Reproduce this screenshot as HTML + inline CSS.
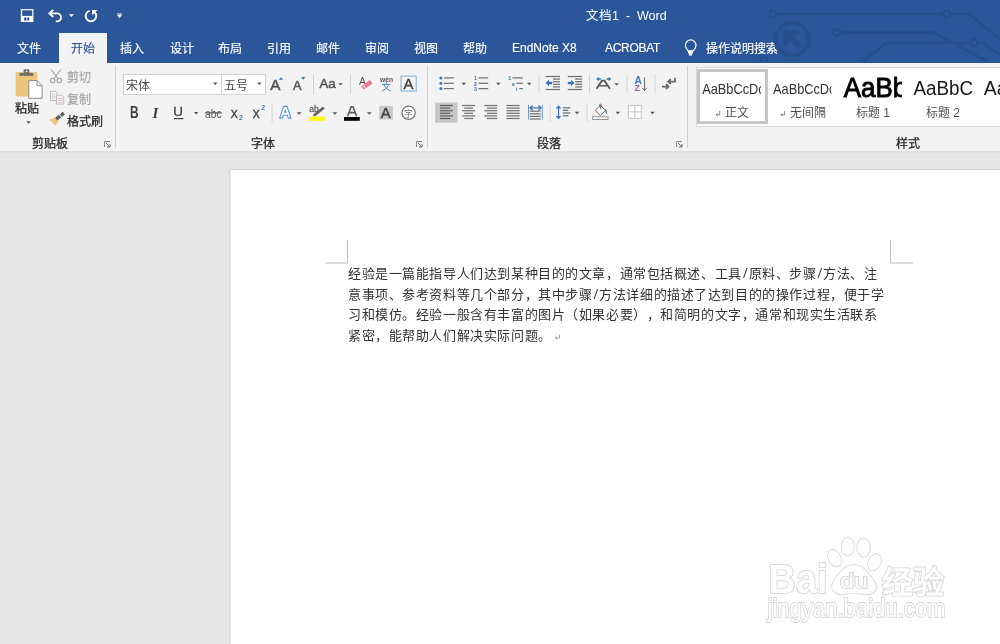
<!DOCTYPE html>
<html lang="zh-CN">
<head>
<meta charset="utf-8">
<style>
html,body{margin:0;padding:0;}
body{width:1000px;height:644px;overflow:hidden;position:relative;background:#E6E6E6;font-family:"Liberation Sans",sans-serif;}
.a{position:absolute;white-space:nowrap;will-change:transform;}
#title{left:0;top:0;width:1000px;height:63px;background:#2B579A;}
#ribbon{left:0;top:63px;width:1000px;height:88px;background:#F3F3F3;border-bottom:2px solid #DFDFDF;}
#acttab{left:59px;top:33px;width:48px;height:31px;background:#F3F3F3;}
.tab{font-size:12px;line-height:16px;color:#fff;top:41px;-webkit-text-stroke:0.15px currentColor;}
.lbl{font-size:12px;line-height:16px;color:#262626;-webkit-text-stroke:0.25px currentColor;}
.grp{font-size:12px;line-height:16px;color:#262626;top:135.5px;-webkit-text-stroke:0.25px currentColor;}
#page{left:229px;top:169px;width:780px;height:500px;background:#fff;border:1px solid #D6D6D6;box-shadow:inset 1px 0 0 #EEEEEE;}
.doc{text-spacing-trim:space-all;font-family:"Liberation Serif",serif;font-size:13px;letter-spacing:0.58px;line-height:20px;color:#333;left:348px;}
.sl{display:inline-block;width:6.79px;text-align:center;letter-spacing:0;font-size:15px;line-height:10px;font-weight:bold;}
</style>
</head>
<body>
<div id="title" class="a"></div>
<div id="ribbon" class="a"></div>
<div id="acttab" class="a"></div>
<div id="page" class="a"></div>

<!-- title text -->
<div class="a" style="left:586px;top:8px;font-size:12.5px;line-height:16px;color:#fff;">文档1&nbsp; -&nbsp; Word</div>

<!-- tabs -->
<div class="a tab" style="left:17px">文件</div>
<div class="a tab" style="left:71px;color:#2B579A">开始</div>
<div class="a tab" style="left:120px">插入</div>
<div class="a tab" style="left:169.5px">设计</div>
<div class="a tab" style="left:217.5px">布局</div>
<div class="a tab" style="left:267px">引用</div>
<div class="a tab" style="left:315.5px">邮件</div>
<div class="a tab" style="left:365px">审阅</div>
<div class="a tab" style="left:414px">视图</div>
<div class="a tab" style="left:462.5px">帮助</div>
<div class="a tab" style="left:512px;top:40px">EndNote X8</div>
<div class="a tab" style="left:605px;top:40px;letter-spacing:-0.3px">ACROBAT</div>
<div class="a tab" style="left:706px">操作说明搜索</div>

<!-- clipboard labels -->
<div class="a lbl" style="left:14.7px;top:101px">粘贴</div>
<div class="a lbl" style="left:66.8px;top:70px;color:#A6A6A6">剪切</div>
<div class="a lbl" style="left:66.8px;top:92px;color:#A6A6A6">复制</div>
<div class="a lbl" style="left:66.8px;top:114px">格式刷</div>
<div class="a grp" style="left:32.4px">剪贴板</div>
<div class="a grp" style="left:251px">字体</div>
<div class="a grp" style="left:537px">段落</div>
<div class="a grp" style="left:896px">样式</div>

<!-- font boxes -->
<div class="a" style="left:123px;top:74px;width:97px;height:19px;background:#fff;border:1px solid #D2D2D2;"></div>
<div class="a" style="left:221px;top:74px;width:43px;height:19px;background:#fff;border:1px solid #D2D2D2;"></div>
<div class="a lbl" style="left:125.8px;top:78px;color:#4A4A4A;-webkit-text-stroke:0">宋体</div>
<div class="a lbl" style="left:224.3px;top:78px;color:#4A4A4A;-webkit-text-stroke:0">五号</div>

<!-- styles gallery -->
<div class="a" style="left:696px;top:67px;width:310px;height:58px;background:#fff;border:1px solid #D9D9D9;"></div>
<div class="a" style="left:696.5px;top:69px;width:64.5px;height:49px;border:3.5px solid #C6C6C6;"></div>

<div class="a lbl" style="left:724.9px;top:105px;color:#505050;-webkit-text-stroke:0">正文</div>
<div class="a lbl" style="left:789.5px;top:105px;color:#505050;-webkit-text-stroke:0">无间隔</div>
<div class="a lbl" style="left:855.9px;top:105px;color:#505050;-webkit-text-stroke:0">标题 1</div>
<div class="a lbl" style="left:926px;top:105px;color:#505050;-webkit-text-stroke:0">标题 2</div>
<!-- document text -->
<div class="a doc" style="top:264px">经验是一篇能指导人们达到某种目的的文章，通常包括概述、工具<span class="sl">/</span>原料、步骤<span class="sl">/</span>方法、注</div>
<div class="a doc" style="top:284.5px">意事项、参考资料等几个部分，其中步骤<span class="sl">/</span>方法详细的描述了达到目的的操作过程，便于学</div>
<div class="a doc" style="top:305px">习和模仿。经验一般含有丰富的图片（如果必要），和简明的文字，通常和现实生活联系</div>
<div class="a doc" style="top:325.5px">紧密，能帮助人们解决实际问题。</div>
<svg class="a" style="left:0;top:0" width="1000" height="644" viewBox="0 0 1000 644">
<!--TITLE-->
<defs><clipPath id="tb"><rect x="0" y="0" width="1000" height="63"/></clipPath></defs>
<g clip-path="url(#tb)">
<g fill="none" stroke="#264F8D" stroke-width="2.6">
<circle cx="773" cy="14" r="3.4"/><path d="M776.4 14H943.3"/><circle cx="946.7" cy="14" r="3.4"/><path d="M950.1 14H969L1004 42"/>
<circle cx="836.7" cy="32.5" r="3.4"/><path d="M840.1 32.5H934L992 64"/>
<path d="M860 64L886 42.9H970.6"/><circle cx="974" cy="42.9" r="3.4"/><path d="M977.4 42.9H983L1004 58"/>
<circle cx="792.2" cy="39.2" r="16.4" stroke-width="4"/>
<circle cx="763.8" cy="60.3" r="3.4"/>
</g>
<path d="M783 30.1H799V35.5H792.4L801.6 44.7L797.8 48.5L788.4 39.1V46H783Z" fill="#264F8D"/>
<rect x="0" y="62" width="59" height="1" fill="#2A5493"/><rect x="107" y="62" width="893" height="1" fill="#2A5493"/>
</g>
<rect x="20.8" y="9.1" width="12.6" height="12.9" fill="#fff"/>
<rect x="22.2" y="10.3" width="10" height="5.6" fill="#2B579A"/>
<rect x="24.1" y="17.5" width="5.1" height="3" fill="#2B579A"/><rect x="26.4" y="17.5" width="0.9" height="3" fill="#fff"/>
<path d="M53.2 9.9L49.4 13.4L53.2 16.9M49.6 13.4H57A4 4 0 0 1 57 21.4H55.8" fill="none" stroke="#fff" stroke-width="1.9"/>
<path d="M68.8 14.2h5.1l-2.55 2.7z" fill="#fff"/>
<path d="M94.6 12.1A5.3 5.3 0 1 1 89.7 10.8" fill="none" stroke="#fff" stroke-width="1.9"/>
<path d="M92 10H97.6L92 15.2Z" fill="#fff"/>
<rect x="117" y="13" width="5" height="1.8" fill="#8BA5CC"/><path d="M117 14.8h5l-2.5 3.4z" fill="#fff"/>
<path d="M688.3 51.2C686.6 49.3 685.4 47.6 685.4 45.2A5.3 5.3 0 0 1 696 45.2C696 47.6 694.8 49.3 693.1 51.2Z" fill="none" stroke="#fff" stroke-width="1.2"/>
<rect x="688" y="50.4" width="5" height="3.2" fill="#fff"/><rect x="689" y="53.4" width="3" height="2.2" fill="#fff"/>
<!--/TITLE-->
<!--RIBBON-->
<rect x="115" y="65.5" width="1" height="82.5" fill="#D0D0D0"/>
<rect x="427" y="65.5" width="1" height="82.5" fill="#D0D0D0"/>
<rect x="687" y="65.5" width="1" height="82.5" fill="#D0D0D0"/>
<path d="M104.5 147V141.5H110" fill="none" stroke="#8A8A8A" stroke-width="1"/><path d="M106 143L109.5 146.5M110 144V147H107" fill="none" stroke="#666" stroke-width="1"/>
<path d="M416.5 147V141.5H422" fill="none" stroke="#8A8A8A" stroke-width="1"/><path d="M418 143L421.5 146.5M422 144V147H419" fill="none" stroke="#666" stroke-width="1"/>
<path d="M676.5 147V141.5H682" fill="none" stroke="#8A8A8A" stroke-width="1"/><path d="M678 143L681.5 146.5M682 144V147H679" fill="none" stroke="#666" stroke-width="1"/>
<rect x="15.6" y="72.1" width="21.7" height="24.5" rx="1.5" fill="#EBC57A"/>
<rect x="19.6" y="73" width="13.7" height="2.8" fill="#6D6D6D"/><rect x="23.7" y="69.3" width="5.6" height="4" rx="1" fill="#6D6D6D"/><circle cx="26.5" cy="71.4" r="0.9" fill="#F3F3F3"/>
<path d="M28.8 80.5H37L42.1 85.6V98.3H28.8Z" fill="#fff" stroke="#8C8C8C" stroke-width="1"/><path d="M37 80.5V85.6H42.1" fill="none" stroke="#8C8C8C" stroke-width="1"/>
<path d="M26.3 121.3h4.6l-2.30 2.4z" fill="#555"/>
<g fill="none" stroke="#A8A8A8" stroke-width="1.1"><circle cx="52.6" cy="80.6" r="2.3"/><circle cx="59.4" cy="80.6" r="2.3"/><path d="M51.2 69.6L58.1 78.6M60.8 69.6L53.9 78.6"/></g>
<g fill="#F8F3F6" stroke="#B8B8B8" stroke-width="0.9"><path d="M50.6 91.3H55.3L57.4 93.4V100.5H50.6Z"/><path d="M56.5 95.2H61.6L63.7 97.3V104.2H56.5Z"/></g>
<g stroke="#D0B9C6" stroke-width="0.8"><path d="M51.8 94H54.5M51.8 96H55.5M51.8 98H55.5M57.8 98.5H62.5M57.8 100.5H62.5M57.8 102.5H62.5"/></g>
<path d="M49.4 119.8L55 117.2L58.8 121.2L55.4 125.6Z" fill="#EBC57A"/>
<path d="M56.2 119.2L60 116.2M60.8 115.6L63.8 113.2" stroke="#5E5E5E" stroke-width="3.4" stroke-linecap="butt"/>
<path d="M212.9 82.4h4.6l-2.30 2.5z" fill="#555"/>
<path d="M257 82.4h4.6l-2.30 2.5z" fill="#555"/>
<text x="270.3" y="90" font-family="Liberation Sans" font-size="15.2" fill="#505050" stroke="#505050" stroke-width="0.5">A</text>
<path d="M278.8 79.8L281 77.2L283.2 79.8Z" fill="#3F78BF"/>
<text x="293" y="90" font-family="Liberation Sans" font-size="12.6" fill="#505050" stroke="#505050" stroke-width="0.45">A</text>
<path d="M301 77H305.4L303.2 79.8Z" fill="#3F78BF"/>
<rect x="313" y="74.8" width="1" height="18.799999999999997" fill="#D4D4D4"/>
<text x="319.4" y="88" font-family="Liberation Sans" font-size="13.2" fill="#505050" stroke="#505050" stroke-width="0.45">Aa</text>
<path d="M338.1 83.2h4.7l-2.35 2.4z" fill="#555"/>
<rect x="350" y="74.8" width="1" height="18.799999999999997" fill="#D4D4D4"/>
<text x="359" y="85" font-family="Liberation Sans" font-size="10.5" fill="#555">A</text>
<g transform="rotate(-36 366.8 84.8)"><rect x="361.4" y="82.5" width="10.8" height="4.6" rx="0.8" fill="#E8808F"/><rect x="363.2" y="82.5" width="0.8" height="4.6" fill="#F3F3F3"/></g>
<text x="380" y="82" font-family="Liberation Sans" font-size="8" font-weight="bold" fill="#555" textLength="13" lengthAdjust="spacingAndGlyphs">wén</text>
<path d="M386.2 82.2V83.8M382.2 84.4H390.4M383.8 84.6Q385.5 89 390.6 91.2M388.8 84.6Q387.2 89 381.8 91.2" fill="none" stroke="#4A7EBB" stroke-width="0.9"/>
<rect x="401.1" y="76.1" width="15.1" height="15" fill="none" stroke="#8DB0DA" stroke-width="1.1"/>
<text x="403.4" y="88.9" font-family="Liberation Sans" font-size="14.8" fill="#404040" stroke="#404040" stroke-width="0.4">A</text>
<text x="130.1" y="117.6" font-family="Liberation Sans" font-size="15.6" font-weight="bold" fill="#404040" textLength="8.6" lengthAdjust="spacingAndGlyphs">B</text>
<text x="152.4" y="117.6" font-family="Liberation Serif" font-size="15" font-style="italic" font-weight="bold" fill="#404040">I</text>
<text x="173.2" y="116.4" font-family="Liberation Sans" font-size="13.4" fill="#404040" stroke="#404040" stroke-width="0.3">U</text>
<rect x="174" y="118" width="9.4" height="1.2" fill="#404040"/>
<path d="M193.8 112h4.6l-2.30 2.6z" fill="#555"/>
<text x="205" y="117.6" font-family="Liberation Sans" font-size="12.5" fill="#606060" textLength="16.5" lengthAdjust="spacingAndGlyphs">abc</text>
<rect x="205" y="112.2" width="16.6" height="1.3" fill="#606060"/>
<text x="230.7" y="117.6" font-family="Liberation Sans" font-size="10.4" fill="#404040" stroke="#404040" stroke-width="0.45">X</text>
<text x="239" y="120.4" font-family="Liberation Sans" font-size="6.8" font-weight="bold" fill="#3F78BF">2</text>
<text x="252.7" y="117.6" font-family="Liberation Sans" font-size="10.4" fill="#404040" stroke="#404040" stroke-width="0.45">X</text>
<text x="261.3" y="110.4" font-family="Liberation Sans" font-size="6.8" font-weight="bold" fill="#3F78BF">2</text>
<rect x="271.6" y="104" width="1" height="18.400000000000006" fill="#D4D4D4"/>
<path d="M283.6 106.4H287.1L291 118.1H288.3L287.4 115.2H283.3L282.4 118.1H279.7Z" fill="#F7FAFD" stroke="#5B8FD0" stroke-width="1.1" stroke-linejoin="round"/><path d="M284 112.8L285.35 108.8L286.7 112.8Z" fill="#5B8FD0"/>
<path d="M296.8 112.2h4.7l-2.35 2.6z" fill="#555"/>
<text x="309.3" y="111.8" font-family="Liberation Sans" font-size="8.6" fill="#666" stroke="#666" stroke-width="0.3">ab</text>
<path d="M314 115.5L323.8 107.6" stroke="#666" stroke-width="2.8"/><path d="M312.6 116.6L314.2 114.6L315.4 115.8Z" fill="#666"/>
<rect x="309" y="116.8" width="16.2" height="4" fill="#FFFF00"/>
<path d="M332.5 112.2h4.6l-2.30 2.6z" fill="#555"/>
<path d="M347.6 116.2L351.2 106.8H353L356.6 116.2M349.2 112.6H355" fill="none" stroke="#5A5A5A" stroke-width="1.6"/>
<rect x="344" y="117" width="15.8" height="3.8" fill="#000"/>
<path d="M367 112.2h4.6l-2.30 2.6z" fill="#555"/>
<rect x="379.2" y="105.9" width="13.7" height="13.5" fill="#C8C8C8"/>
<text x="380.8" y="118" font-family="Liberation Sans" font-size="14.8" fill="#404040" stroke="#404040" stroke-width="0.4">A</text>
<circle cx="408.6" cy="112.8" r="6.6" fill="#fff" stroke="#777" stroke-width="1.2"/>
<text x="404.4" y="117" font-family="Liberation Sans" font-size="8.6" fill="#666">字</text>
<circle cx="440.9" cy="77.9" r="1.5" fill="#3D74BC"/><rect x="444" y="77.3" width="9.8" height="1.2" fill="#6E6E6E"/>
<circle cx="440.9" cy="83.3" r="1.5" fill="#3D74BC"/><rect x="444" y="82.7" width="9.8" height="1.2" fill="#6E6E6E"/>
<circle cx="440.9" cy="88.6" r="1.5" fill="#3D74BC"/><rect x="444" y="88.0" width="9.8" height="1.2" fill="#6E6E6E"/>
<path d="M461.4 82.8h4.7l-2.35 2.4z" fill="#555"/>
<rect x="478.7" y="77.3" width="9.5" height="1.2" fill="#6E6E6E"/>
<rect x="478.7" y="82.7" width="9.5" height="1.2" fill="#6E6E6E"/>
<rect x="478.7" y="88.0" width="9.5" height="1.2" fill="#6E6E6E"/>
<text x="474" y="80.4" font-family="Liberation Sans" font-size="5.4" font-weight="bold" fill="#3D74BC">1</text><text x="474" y="85.8" font-family="Liberation Sans" font-size="5.4" font-weight="bold" fill="#3D74BC">2</text><text x="474" y="91.1" font-family="Liberation Sans" font-size="5.4" font-weight="bold" fill="#3D74BC">3</text>
<path d="M496 82.8h4.7l-2.35 2.4z" fill="#555"/>
<rect x="512.4" y="77.3" width="10.5" height="1.2" fill="#6E6E6E"/><rect x="516.6" y="82.7" width="6.3" height="1.2" fill="#6E6E6E"/><rect x="519.2" y="88" width="3.7" height="1.2" fill="#6E6E6E"/>
<text x="508.2" y="80.4" font-family="Liberation Sans" font-size="5.4" font-weight="bold" fill="#3D74BC">1</text><text x="511.8" y="85.8" font-family="Liberation Sans" font-size="5.4" font-weight="bold" fill="#3D74BC">a</text><text x="516" y="91.1" font-family="Liberation Sans" font-size="5.4" font-weight="bold" fill="#3D74BC">i</text>
<path d="M527 82.8h4.4l-2.20 2.4z" fill="#555"/>
<rect x="538.6" y="74.6" width="1" height="18.200000000000003" fill="#D4D4D4"/>
<rect x="545.6" y="75.9" width="14.4" height="1.2" fill="#6E6E6E"/><rect x="553.0" y="78.5" width="7" height="1.2" fill="#6E6E6E"/><rect x="553.0" y="81.1" width="7" height="1.2" fill="#6E6E6E"/><rect x="553.0" y="83.7" width="7" height="1.2" fill="#6E6E6E"/><rect x="553.0" y="86.3" width="7" height="1.2" fill="#6E6E6E"/><rect x="545.6" y="88.9" width="14.4" height="1.2" fill="#6E6E6E"/><path d="M545.6 83L549.0 79.8V81.8H552.2V84.2H549.0V86.2Z" fill="#3D74BC"/>
<rect x="567.8" y="75.9" width="14.4" height="1.2" fill="#6E6E6E"/><rect x="575.2" y="78.5" width="7" height="1.2" fill="#6E6E6E"/><rect x="575.2" y="81.1" width="7" height="1.2" fill="#6E6E6E"/><rect x="575.2" y="83.7" width="7" height="1.2" fill="#6E6E6E"/><rect x="575.2" y="86.3" width="7" height="1.2" fill="#6E6E6E"/><rect x="567.8" y="88.9" width="14.4" height="1.2" fill="#6E6E6E"/><path d="M574.5 83L571.1 79.8V81.8H567.8V84.2H571.1V86.2Z" fill="#3D74BC"/>
<rect x="589" y="74.6" width="1" height="18.200000000000003" fill="#D4D4D4"/>
<path d="M596.5 88.7L602 80.6H604.4L609.9 88.7" fill="none" stroke="#505050" stroke-width="1.8"/><path d="M599.4 85.8H607" stroke="#505050" stroke-width="1.4"/>
<path d="M596 79L598.7 76.8V78.2H600.9V79.8H598.7V81.2Z" fill="#3D74BC"/><path d="M611.3 79L608.6 76.8V78.2H606.4V79.8H608.6V81.2Z" fill="#3D74BC"/>
<path d="M614.2 83.3h4.7l-2.35 2.3z" fill="#555"/>
<rect x="626.6" y="74.6" width="1" height="18.200000000000003" fill="#D4D4D4"/>
<text x="634.4" y="83.7" font-family="Liberation Sans" font-size="10.2" font-weight="bold" fill="#3D7CC9">A</text>
<text x="634.6" y="90.9" font-family="Liberation Sans" font-size="8.6" font-weight="bold" fill="#8E5CC2">Z</text>
<path d="M644.6 77.2V90.4M642.3 87.8L644.6 90.6L646.9 87.8" fill="none" stroke="#6A6A6A" stroke-width="1"/>
<rect x="654.5" y="74.6" width="1" height="18.200000000000003" fill="#D4D4D4"/>
<path d="M675 77.8V81.6H668.6M670.8 79.2L668.2 81.6L670.8 84" fill="none" stroke="#6A6A6A" stroke-width="1.8"/>
<path d="M662 86.6H668.2M666 84.2L668.6 86.6L666 89" fill="none" stroke="#6A6A6A" stroke-width="1.8"/>
<rect x="435.2" y="102.6" width="22.3" height="20.1" fill="#C6C6C6"/>
<rect x="440" y="104.9" width="12.9" height="1.2" fill="#5E5E5E"/>
<rect x="462.1" y="104.9" width="13" height="1.2" fill="#6E6E6E"/>
<rect x="484.3" y="104.9" width="13" height="1.2" fill="#6E6E6E"/>
<rect x="506.5" y="104.9" width="13.1" height="1.2" fill="#6E6E6E"/>
<rect x="440" y="107.5" width="10.2" height="1.2" fill="#5E5E5E"/>
<rect x="464.2" y="107.5" width="8.9" height="1.2" fill="#6E6E6E"/>
<rect x="487" y="107.5" width="10.3" height="1.2" fill="#6E6E6E"/>
<rect x="506.5" y="107.5" width="13.1" height="1.2" fill="#6E6E6E"/>
<rect x="440" y="110.1" width="12.9" height="1.2" fill="#5E5E5E"/>
<rect x="462.1" y="110.1" width="13" height="1.2" fill="#6E6E6E"/>
<rect x="484.3" y="110.1" width="13" height="1.2" fill="#6E6E6E"/>
<rect x="506.5" y="110.1" width="13.1" height="1.2" fill="#6E6E6E"/>
<rect x="440" y="112.7" width="10.2" height="1.2" fill="#5E5E5E"/>
<rect x="464.2" y="112.7" width="8.9" height="1.2" fill="#6E6E6E"/>
<rect x="487" y="112.7" width="10.3" height="1.2" fill="#6E6E6E"/>
<rect x="506.5" y="112.7" width="13.1" height="1.2" fill="#6E6E6E"/>
<rect x="440" y="115.3" width="12.9" height="1.2" fill="#5E5E5E"/>
<rect x="462.1" y="115.3" width="13" height="1.2" fill="#6E6E6E"/>
<rect x="484.3" y="115.3" width="13" height="1.2" fill="#6E6E6E"/>
<rect x="506.5" y="115.3" width="13.1" height="1.2" fill="#6E6E6E"/>
<rect x="440" y="117.9" width="10.2" height="1.2" fill="#5E5E5E"/>
<rect x="464.2" y="117.9" width="8.9" height="1.2" fill="#6E6E6E"/>
<rect x="487" y="117.9" width="10.3" height="1.2" fill="#6E6E6E"/>
<rect x="506.5" y="117.9" width="13.1" height="1.2" fill="#6E6E6E"/>
<rect x="528" y="104.9" width="1" height="14.7" fill="#6C9AD3"/><rect x="541.8" y="104.9" width="1" height="14.7" fill="#6C9AD3"/>
<path d="M530 107.8H541M532.6 105.4L530 107.8L532.6 110.2M538.4 105.4L541 107.8L538.4 110.2" fill="none" stroke="#3D74BC" stroke-width="1.3"/>
<rect x="529.8" y="110.6" width="10.8" height="1.2" fill="#6E6E6E"/>
<rect x="529.8" y="113.2" width="10.8" height="1.2" fill="#6E6E6E"/>
<rect x="529.8" y="115.8" width="10.8" height="1.2" fill="#6E6E6E"/>
<rect x="529.8" y="118.4" width="10.8" height="1.2" fill="#6E6E6E"/>
<rect x="549.6" y="103.2" width="1" height="18.39999999999999" fill="#D4D4D4"/>
<path d="M558.5 107.5V117" stroke="#3D74BC" stroke-width="1.3"/><path d="M555.8 108.6L558.5 104.9L561.2 108.6ZM555.8 115.9L558.5 119.6L561.2 115.9Z" fill="#3D74BC"/>
<rect x="562.8" y="107.2" width="7.5" height="1.2" fill="#6E6E6E"/>
<rect x="562.8" y="109.8" width="5.5" height="1.2" fill="#6E6E6E"/>
<rect x="562.8" y="112.4" width="7.5" height="1.2" fill="#6E6E6E"/>
<rect x="562.8" y="115.2" width="5.5" height="1.2" fill="#6E6E6E"/>
<path d="M574.7 111.8h4.6l-2.30 2.4z" fill="#555"/>
<rect x="586.6" y="103.2" width="1" height="18.39999999999999" fill="#D4D4D4"/>
<path d="M595.3 110.4L600.4 105.3L605.5 110.4L600.4 115.5Z" fill="#fff" stroke="#6E6E6E" stroke-width="1"/>
<path d="M600.4 104.5V109.5" stroke="#6E6E6E" stroke-width="0.9"/><circle cx="600.4" cy="105.2" r="1.2" fill="none" stroke="#6E6E6E" stroke-width="0.8"/>
<path d="M604.8 108.4Q607.8 110.5 606.5 114.6Q605.2 112 604.8 108.4Z" fill="#3D74BC"/>
<rect x="592.6" y="116.8" width="15.4" height="2.7" fill="#fff" stroke="#8A8A8A" stroke-width="0.9"/>
<path d="M615.6 111.8h4.5l-2.25 2.4z" fill="#555"/>
<rect x="628.3" y="105.4" width="13" height="13" fill="#fff" stroke="#C4C4C4" stroke-width="1"/><path d="M634.8 105.4V118.4M628.3 111.9H641.3" stroke="#C4C4C4" stroke-width="1"/>
<path d="M650.2 111.8h4.6l-2.30 2.4z" fill="#555"/>
<defs><clipPath id="c1"><rect x="700" y="70" width="61" height="40"/></clipPath><clipPath id="c2"><rect x="770" y="70" width="61.5" height="40"/></clipPath><clipPath id="c3"><rect x="840" y="70" width="61.8" height="40"/></clipPath><clipPath id="c4"><rect x="910" y="70" width="90" height="40"/></clipPath></defs>
<g clip-path="url(#c1)"><text x="702.2" y="94" font-family="Liberation Sans" font-size="14.4" fill="#333" textLength="62.5" lengthAdjust="spacingAndGlyphs">AaBbCcDc</text></g>
<g clip-path="url(#c2)"><text x="773" y="94" font-family="Liberation Sans" font-size="14.4" fill="#333" textLength="62.5" lengthAdjust="spacingAndGlyphs">AaBbCcDc</text></g>
<g clip-path="url(#c3)"><text x="843.8" y="97.2" font-family="Liberation Sans" font-size="27.5" fill="#000" stroke="#000" stroke-width="0.9" textLength="63.5" lengthAdjust="spacingAndGlyphs">AaBb</text></g>
<g clip-path="url(#c4)"><text x="913.5" y="95.2" font-family="Liberation Sans" font-size="19.5" fill="#1a1a1a" textLength="59.6" lengthAdjust="spacingAndGlyphs">AaBbC</text><text x="983.8" y="95.2" font-family="Liberation Sans" font-size="19.5" fill="#1a1a1a">Aa</text></g>
<path d="M719.8 111V114.8H716.3M717.6 113.5L716 114.8L717.6 116.1" fill="none" stroke="#777" stroke-width="0.9"/>
<path d="M784.6 111V114.8H781.1M782.4 113.5L780.8 114.8L782.4 116.1" fill="none" stroke="#777" stroke-width="0.9"/>
<!--/RIBBON-->
<!--DOC-->
<path d="M347.5 240V263H325M890.5 240V263H913" fill="none" stroke="#BFBFBF" stroke-width="1"/>
<path d="M559.5 334.5V338H555.5M557 336.6L555.3 338L557 339.4" fill="none" stroke="#9A9A9A" stroke-width="0.9"/>
<!--WM-->
<g fill="#fff" stroke="#D8D8D8" stroke-width="1.8" paint-order="stroke">
<text x="768.5" y="593" font-family="Liberation Sans" font-size="41" font-weight="bold" textLength="59" lengthAdjust="spacingAndGlyphs">Bai</text>
<ellipse cx="834.6" cy="558.2" rx="5.8" ry="8.8" transform="rotate(-28 834.6 558.2)"/>
<ellipse cx="847.8" cy="546.6" rx="6" ry="9"/>
<ellipse cx="863.6" cy="547.6" rx="6.4" ry="9"/>
<ellipse cx="874.5" cy="562.3" rx="5.8" ry="8.6" transform="rotate(28 874.5 562.3)"/>
<path d="M854 565C845 565 838 575 834 581C829 589 835 595 843 594C849 593 859 593 866 594C874 595 879 589 874 581C870 575 863 565 854 565Z"/>
<text x="882" y="593" font-family="Liberation Sans" font-size="31" font-weight="bold" textLength="62" lengthAdjust="spacingAndGlyphs">经验</text>
<text x="767.5" y="617" font-family="Liberation Sans" font-size="25" textLength="178" lengthAdjust="spacingAndGlyphs">jingyan.baidu.com</text>
</g>
<text x="840" y="587.5" font-family="Liberation Sans" font-size="20" fill="#fff" stroke="#D8D8D8" stroke-width="1.8" paint-order="stroke" textLength="28" lengthAdjust="spacingAndGlyphs">du</text>
</svg>
</body>
</html>
